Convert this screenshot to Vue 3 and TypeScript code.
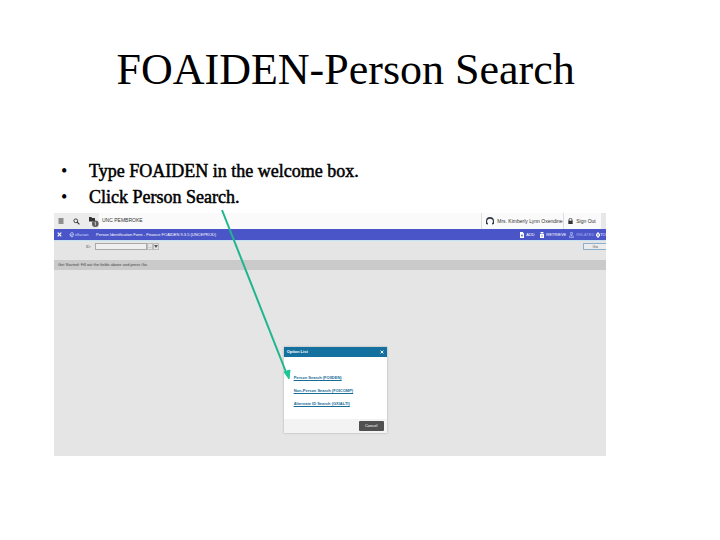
<script setup lang="ts">
import { ref } from 'vue'

const steps: string[] = ['Type FOAIDEN in the welcome box.', 'Click Person Search.']
const options: string[] = [
  'Person Search (FOIIDEN)',
  'Non-Person Search (FOICOMP)',
  'Alternate ID Search (GXIALTI)',
]
const personId = ref<string>('')
</script>

<template>
  <main class="slide">
    <h1>FOAIDEN-Person Search</h1>
    <ul class="steps">
      <li v-for="step in steps" :key="step">{{ step }}</li>
    </ul>

    <section class="app">
      <header class="top">
        <nav class="tools">
          <button type="button" aria-label="Menu">
            <svg width="6" height="6" viewBox="0 0 6 6"><path d="M.5 1h5M.5 3h5M.5 5h5" stroke="#333" stroke-width="1.1" /></svg>
          </button>
          <button type="button" aria-label="Search">
            <svg width="7" height="7" viewBox="0 0 7 7"><circle cx="2.8" cy="2.8" r="1.9" fill="none" stroke="#333" stroke-width=".9" /><path d="M4.2 4.2l2.2 2.2" stroke="#333" stroke-width="1.2" /></svg>
          </button>
          <button type="button" class="open" aria-label="Open pages">
            <svg width="10" height="12" viewBox="0 0 10 12">
              <path d="M0 1h2.4l.7 1H6v3.5H0z" fill="#333" />
              <circle cx="6.3" cy="7.8" r="3.3" fill="#5a5a5a" />
              <path d="M5.6 6.6l.8-.5v3.4" fill="none" stroke="#ddd" stroke-width=".8" />
            </svg>
          </button>
        </nav>
        <span class="brand">UNC PEMBROKE</span>
        <span class="user">
          <svg width="8" height="8" viewBox="0 0 8 8"><path d="M0 7V4a4 4 0 018 0v3L6 7.6V6.4A2.6 2.6 0 005.8 2.3 3 3 0 002.2 2.3 2.6 2.6 0 002 6.4v1.2z" fill="#333b45" /></svg>
          Mrs. Kimberly Lynn Oxendine
        </span>
        <button type="button" class="sign">
          <svg width="5" height="6" viewBox="0 0 5 6"><path d="M1 3V1.8a1.5 1.5 0 013 0V3" fill="none" stroke="#333" stroke-width=".8" /><path d="M.3 2.7h4.4V6H.3z" fill="#333" /></svg>
          Sign Out
        </button>
        <span class="edge"></span>
      </header>

      <div class="bar">
        <button type="button" class="close" aria-label="Close form">
          <svg width="5" height="5" viewBox="0 0 5 5"><path d="M.7.7l3.6 3.6M4.3.7L.7 4.3" stroke="#fff" stroke-width="1.1" /></svg>
        </button>
        <span class="logo">
          <svg width="5" height="6" viewBox="0 0 5 6"><path d="M4.3 1.2a2 2 0 10.1 3M1.5 3h2.8V1.5" fill="none" stroke="#d8dcff" stroke-width=".8" /></svg>
          ellucian
        </span>
        <span class="form-name">Person Identification Form - Finance FOAIDEN 9.3.5 (UNCEPROD)</span>
        <div class="actions">
          <button type="button">
            <svg width="4" height="6" viewBox="0 0 4 6"><path d="M0 0h2.7L4 1.4V6H0z" fill="#fff" /><path d="M2 2.3v2.4M.9 3.5h2.2" stroke="#4a55c8" stroke-width=".7" /></svg>
            ADD
          </button>
          <button type="button">
            <svg width="4" height="6" viewBox="0 0 4 6"><path d="M0 2h4v4H0zM.6 0h2.8v1.5H.6z" fill="#fff" /><path d="M1 4h2" stroke="#4a55c8" stroke-width=".6" /></svg>
            RETRIEVE
          </button>
          <button type="button" class="off">
            <svg width="5" height="6" viewBox="0 0 5 6"><path d="M1.5.5h2v2h-2zM2.5 2.5V4M.4 5.5V4h4.2v1.5z" fill="none" stroke="#a4abec" stroke-width=".8" /></svg>
            RELATED
          </button>
          <button type="button" class="last">
            <svg width="4" height="6" viewBox="0 0 4 6"><path d="M1.500 0h1v1L4 2v2L2.500 5v1h-1V5L0 4V2l1.500-1z" fill="#fff" /><circle cx="2" cy="3" r=".8" fill="#4a55c8" /></svg>
            TO
          </button>
        </div>
      </div>

      <form class="key" @submit.prevent>
        <label for="person-id">ID:</label>
        <input id="person-id" v-model="personId" type="text" />
        <button type="button" class="lookup">...</button>
        <button type="button" class="lookup" aria-label="List">
          <svg width="4" height="3" viewBox="0 0 4 3"><path d="M0 0h4L2 3z" fill="#555" /></svg>
        </button>
        <button type="submit" class="go">Go</button>
      </form>
      <p class="hint">Get Started: Fill out the fields above and press Go.</p>

      <div class="canvas">
        <section class="dialog" role="dialog" aria-labelledby="dialog-title">
          <header>
            <h2 id="dialog-title">Option List</h2>
            <button type="button" aria-label="Close">
              <svg width="4" height="4" viewBox="0 0 4 4"><path d="M.6.6l2.800 2.800M3.400.6L.6 3.400" stroke="#fff" stroke-width="1" /></svg>
            </button>
          </header>
          <ul>
            <li v-for="option in options" :key="option"><a href="#">{{ option }}</a></li>
          </ul>
          <footer><button type="button">Cancel</button></footer>
        </section>
      </div>

      <svg class="pointer" width="72" height="174" viewBox="0 0 72 174" aria-hidden="true">
        <path d="M3 3L67 165" stroke="#20b58c" stroke-width="2" />
        <path d="M65 165l6-2-1 9z" fill="#1cc595" stroke="#1cc595" />
      </svg>
    </section>
  </main>
</template>

<style>
body {
  margin: 0;
  background: #fff;
}
</style>

<style scoped>
* {
  box-sizing: border-box;
}
.slide {
  padding: 44px 0 24px;
  font-family: "Liberation Serif", serif;
  color: #000;
}
h1 {
  margin: 0 4% 0 0;
  font-size: 44px;
  font-weight: 400;
  line-height: 52px;
  text-align: center;
}
.steps {
  margin: 62px 0 0;
  padding: 0 0 0 89px;
  font-size: 18px;
  line-height: 26px;
  list-style: none;
  -webkit-text-stroke: 0.5px #000;
}
.steps li::before {
  content: "•";
  display: inline-block;
  width: 28px;
  margin-left: -28px;
  -webkit-text-stroke: 0;
}
.app {
  position: relative;
  margin: 3px 15.8% 0 7.5%;
  background: #e5e5e5;
  font-family: "Liberation Sans", sans-serif;
  font-size: 4px;
  line-height: 6px;
}
button {
  display: flex;
  align-items: center;
  padding: 0;
  border: 0;
  background: none;
  color: inherit;
  font: inherit;
  white-space: nowrap;
}
svg {
  display: block;
  flex: none;
}
.top {
  display: flex;
  height: 16px;
  background: #fafafa;
  color: #333;
  font-size: 5px;
  line-height: 14px;
  white-space: nowrap;
}
.tools {
  display: flex;
  align-items: center;
  gap: 9px;
  width: 45px;
  padding: 0 4px;
  background: #ececec;
}
.open {
  margin-top: 2px;
}
.brand {
  padding-left: 3px;
}
.user,
.sign {
  display: flex;
  align-items: center;
  gap: 3px;
  padding: 0 4px;
  border-left: 1px solid #ddd;
}
.user {
  width: 82px;
  margin-left: auto;
}
.sign {
  width: 38px;
}
.edge {
  width: 5px;
  background: #e7e7e7;
}
.bar {
  display: flex;
  align-items: center;
  height: 11px;
  padding-left: 3px;
  background: #4a55c8;
  color: #fff;
  white-space: nowrap;
}
.logo {
  display: flex;
  align-items: center;
  gap: 1px;
  width: 27px;
  margin-left: 7px;
  color: #d8dcff;
}
.actions {
  display: grid;
  grid-template-columns: 20px 29px 27px 10px;
  margin-left: auto;
}
.actions button {
  gap: 2px;
}
.actions .last {
  gap: 0;
}
.off {
  color: #a4abec;
}
.key {
  display: flex;
  align-items: center;
  height: 20px;
  padding: 0 0 8px 32px;
  border-top: 1px solid #c5e2f4;
  color: #555;
}
.key label {
  width: 9px;
}
.key input {
  width: 52px;
  height: 7px;
  padding: 0 1px;
  border: 1px solid #aaa;
  background: #efefef;
  font: inherit;
}
.lookup {
  justify-content: center;
  width: 6px;
  height: 7px;
  border: 1px solid #bbb;
}
.go {
  justify-content: center;
  width: 23px;
  height: 7px;
  margin-left: auto;
  border: 1px solid #8ab0ce;
  border-right: 0;
  border-radius: 1px 0 0 1px;
  background: #ececec;
}
.hint {
  margin: 0;
  padding: 2px 4px;
  background: #cacaca;
  color: #444;
}
.canvas {
  display: flex;
  justify-content: center;
  padding: 77px 0 23px;
}
.dialog {
  width: 103px;
  margin-right: 92px;
  margin-left: 102px;
  background: #fff;
  box-shadow: 0 0 2px #aaa;
}
.dialog header {
  display: flex;
  align-items: center;
  justify-content: space-between;
  height: 10px;
  padding: 0 3px;
  background: #14719f;
  color: #fff;
}
.dialog h2 {
  margin: 0;
  font-size: 4px;
  font-weight: 700;
  line-height: 6px;
}
.dialog ul {
  margin: 0;
  padding: 14px 10px 9px;
  list-style: none;
  line-height: 13px;
}
.dialog li {
  height: 13px;
}
.dialog a {
  color: #176d96;
  font-weight: 700;
}
.dialog footer {
  display: flex;
  justify-content: flex-end;
  padding: 2px 3px;
  background: #f3f3f3;
}
.dialog footer button {
  justify-content: center;
  width: 25px;
  height: 10px;
  border-radius: 1px;
  background: #505050;
  color: #fff;
}
.pointer {
  position: absolute;
  top: -6px;
  left: 165px;
}
</style>
